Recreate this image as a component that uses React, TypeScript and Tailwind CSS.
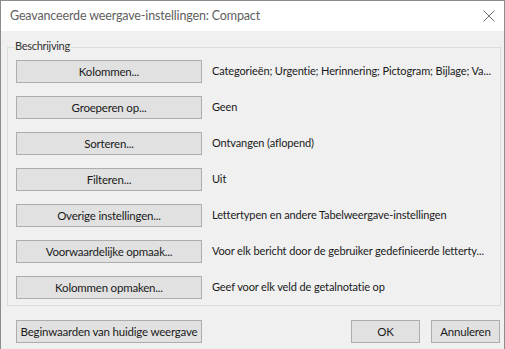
import React from "react";

const rows: [string, string][] = [
  ["Kolommen...", "Categorieën; Urgentie; Herinnering; Pictogram; Bijlage; Va..."],
  ["Groeperen op...", "Geen"],
  ["Sorteren...", "Ontvangen (aflopend)"],
  ["Filteren...", "Uit"],
  ["Overige instellingen...", "Lettertypen en andere Tabelweergave-instellingen"],
  ["Voorwaardelijke opmaak...", "Voor elk bericht door de gebruiker gedefinieerde letterty..."],
  ["Kolommen opmaken...", "Geef voor elk veld de getalnotatie op"],
];

function Btn({ children, className }: { children: React.ReactNode; className?: string }) {
  return (
    <div
      className={
        "h-[23px] flex items-center justify-center whitespace-nowrap bg-[#e1e1e1] border border-[#adadad] text-[11.5px] tracking-[-0.2px] text-[#1a1a1a] leading-none " +
        (className ?? "")
      }
    >
      {children}
    </div>
  );
}

export default function App() {
  return (
    <div
      className="w-[505px] h-[349px] flex flex-col border-l border-t border-r border-[#8c8c8c] bg-[#f0f0f0] overflow-hidden"
      style={{ fontFamily: 'Lato, "Noto Sans", sans-serif' }}
    >
      <div className="h-[30px] bg-white flex items-center justify-between pl-[9px] pr-[8px] shrink-0">
        <span className="text-[12.5px] tracking-[-0.15px] text-[#606060]">Geavanceerde weergave-instellingen: Compact</span>
        <svg width="12" height="12" viewBox="0 0 12 12" className="mr-[1px]">
          <path d="M0.5 0.5 L11.5 11.5 M11.5 0.5 L0.5 11.5" stroke="#707070" strokeWidth="1" fill="none" />
        </svg>
      </div>
      <div className="flex-1 flex flex-col pl-[6px] pr-[3px]">
        <div className="relative mt-[16px] border border-[#dcdcdc] pt-[12px] pb-[6px] pl-[8px]">
          <span className="absolute left-[6px] top-[-8px] px-[1px] bg-[#f0f0f0] text-[11px] tracking-[-0.3px] leading-none text-[#333]">
            Beschrijving
          </span>
          <div className="flex flex-col gap-[13px]">
            {rows.map(([b, d]) => (
              <div key={b} className="flex items-center">
                <Btn className="w-[186px] shrink-0">{b}</Btn>
                <span className="ml-[10px] text-[11px] tracking-[-0.12px] text-[#1a1a1a] whitespace-nowrap">{d}</span>
              </div>
            ))}
          </div>
        </div>
        <div className="flex items-center mt-[14px] pl-[9px]">
          <Btn className="w-[186px]">Beginwaarden van huidige weergave</Btn>
          <div className="flex-1" />
          <Btn className="w-[69px]">OK</Btn>
          <Btn className="w-[69px] ml-[11px] mr-[1px]">Annuleren</Btn>
        </div>
      </div>
    </div>
  );
}
